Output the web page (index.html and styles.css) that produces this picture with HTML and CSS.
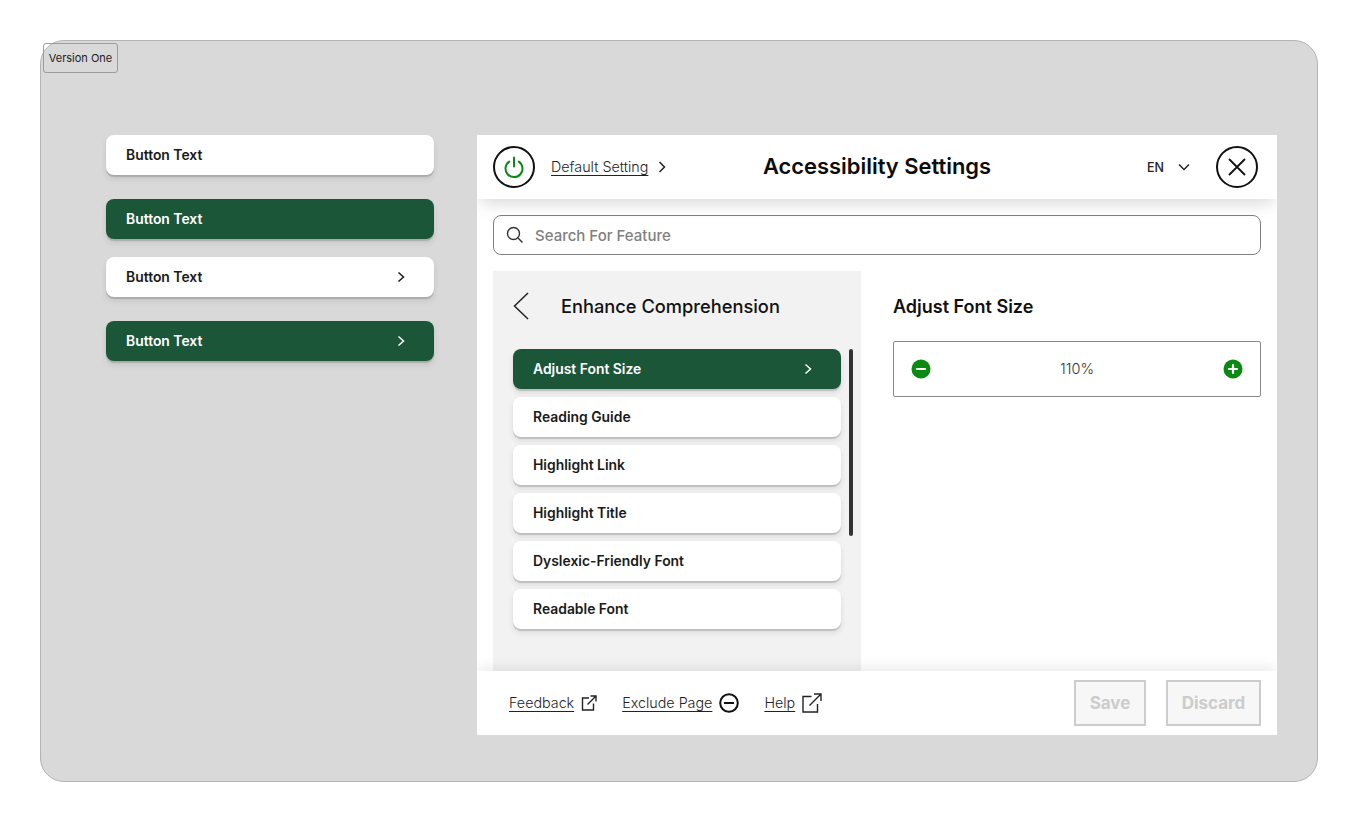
FILE: index.html
```html
<!DOCTYPE html>
<html lang="en">
<head>
<meta charset="utf-8">
<title>Accessibility Settings</title>
<link rel="stylesheet" href="styles.css">
</head>
<body>
<main class="frame">
  <div class="version">Version One</div>
  <section class="samples">
    <div class="sample-group">
      <button class="btn">Button Text</button>
      <button class="btn btn-dark">Button Text</button>
    </div>
    <div class="sample-group">
      <button class="btn">Button Text<svg class="chev" viewBox="0 0 12 12"><path d="M3.500 1.500 8.500 6 3.500 10.500"/></svg></button>
      <button class="btn btn-dark">Button Text<svg class="chev" viewBox="0 0 12 12"><path d="M3.500 1.500 8.500 6 3.500 10.500"/></svg></button>
    </div>
  </section>
  <section class="panel">
    <header class="head">
      <div class="head-left">
        <span class="round"><svg class="power" viewBox="0 0 24 24"><path d="M7.200 6.600a8.500 8.500 0 1 0 9.600 0"/><path d="M12 2.500v9"/></svg></span>
        <a class="link">Default Setting</a>
        <svg class="chev chev-head" viewBox="0 0 12 12"><path d="M3.500 1 8.500 6 3.500 11"/></svg>
      </div>
      <h1 class="title">Accessibility Settings</h1>
      <div class="head-right">
        <span class="lang">EN</span>
        <svg class="lang-chev" viewBox="0 0 12 8"><path d="M1 1.500 6 6.500 11 1.500"/></svg>
        <span class="round"><svg class="close" viewBox="0 0 20 20"><path d="M2 2 18 18M18 2 2 18"/></svg></span>
      </div>
    </header>
    <div class="search-wrap">
      <div class="search">
        <svg class="search-icon" viewBox="0 0 18 18"><circle cx="7.500" cy="7.500" r="6"/><path d="M12 12 16.500 16.500"/></svg>
        <span>Search For Feature</span>
      </div>
    </div>
    <div class="body">
      <nav class="nav">
        <div class="nav-head">
          <svg class="back" viewBox="0 0 16 28"><path d="M15 1 1.500 14 15 27"/></svg>
          <h2 class="nav-title">Enhance Comprehension</h2>
        </div>
        <div class="nav-scroll">
          <div class="nav-list">
            <button class="btn btn-dark">Adjust Font Size<svg class="chev" viewBox="0 0 12 12"><path d="M3.500 1.500 8.500 6 3.500 10.500"/></svg></button>
            <button class="btn">Reading Guide</button>
            <button class="btn">Highlight Link</button>
            <button class="btn">Highlight Title</button>
            <button class="btn">Dyslexic-Friendly Font</button>
            <button class="btn">Readable Font</button>
          </div>
          <div class="scrollbar"></div>
        </div>
      </nav>
      <div class="detail">
        <h2 class="detail-title">Adjust Font Size</h2>
        <div class="stepper">
          <svg class="step" viewBox="0 0 20 20"><circle cx="10" cy="10" r="9.500"/><path d="M6 10h8"/></svg>
          <span class="step-value">110%</span>
          <svg class="step" viewBox="0 0 20 20"><circle cx="10" cy="10" r="9.500"/><path d="M6 10h8M10 6v8"/></svg>
        </div>
      </div>
    </div>
    <footer class="foot">
      <div class="foot-links">
        <div class="foot-item"><a class="link">Feedback</a>
          <svg class="ext" viewBox="0 0 16 16"><path d="M8 3H1.500V15H12.500V8.500M6.500 9.500 15 1M9.500 1H15V6.500"/></svg></div>
        <div class="foot-item"><a class="link">Exclude Page</a>
          <svg class="exclude" viewBox="0 0 20 20"><circle cx="10" cy="10" r="8.800"/><path d="M5 10h10"/></svg></div>
        <div class="foot-item"><a class="link">Help</a>
          <svg class="ext ext-lg" viewBox="0 0 20 20"><path d="M9.500 3.500H1V19H15.500V11M7.500 12.500 19 1M12 1H19V8"/></svg></div>
      </div>
      <div class="foot-actions">
        <button class="ghost ghost-save">Save</button>
        <button class="ghost ghost-discard">Discard</button>
      </div>
    </footer>
  </section>
</main>
</body>
</html>
```

FILE: styles.css
```css
* { box-sizing: border-box; }
html, body { margin: 0; padding: 0; background: #fff; }
body { padding: 40px; font-family: Inter, "Liberation Sans", sans-serif; color: #1a1a1a; }
h1, h2 { margin: 0; }

.frame {
  position: relative;
  width: 1278px;
  height: 742px;
  display: flex;
  gap: 43px;
  padding: 94px 0 0 65px;
  background: #d9d9d9;
  border: 1px solid #b4b4b4;
  border-radius: 24px;
}
.version {
  position: absolute;
  left: 2px;
  top: 2px;
  width: 75px;
  height: 30px;
  display: flex;
  align-items: center;
  justify-content: center;
  padding-bottom: 1px;
  font-size: 11px;
  color: #222;
  border: 1px solid #9c9c9c;
  border-radius: 3px;
}

.samples { width: 328px; display: flex; flex-direction: column; gap: 18px; }
.sample-group { display: flex; flex-direction: column; gap: 24px; }

.btn {
  width: 328px;
  height: 40px;
  flex: none;
  display: flex;
  align-items: center;
  justify-content: space-between;
  padding: 0 27px 1px 20px;
  border: 0;
  border-radius: 8px;
  background: #fff;
  color: #1a1a1a;
  font: 600 13.900px Inter, "Liberation Sans", sans-serif;
  box-shadow: 0 2px 1px rgba(0, 0, 0, .15), 0 4px 6px rgba(0, 0, 0, .09);
}
.btn-dark { background: #1c5639; color: #fff; }
.chev { width: 12px; height: 12px; margin-top: 1px; fill: none; stroke: currentColor; stroke-width: 1.500; }

.panel {
  width: 800px;
  height: 600px;
  display: flex;
  flex-direction: column;
  background: #fff;
  overflow: hidden;
}

.head {
  position: relative;
  z-index: 2;
  flex: none;
  height: 64px;
  display: grid;
  grid-template-columns: 1fr auto 1fr;
  align-items: center;
  padding: 0 16px;
  background: #fff;
  box-shadow: 0 8px 16px -4px rgba(0, 0, 0, .16);
}
.head-left { display: flex; align-items: center; }
.head-right { display: flex; align-items: center; justify-content: flex-end; margin-right: 3px; }
.round {
  width: 42px;
  height: 42px;
  flex: none;
  display: flex;
  align-items: center;
  justify-content: center;
  border: 2px solid #111;
  border-radius: 50%;
}
.power { width: 24px; height: 24px; fill: none; stroke: #0a8a12; stroke-width: 2; stroke-linecap: round; }
.close { width: 20px; height: 20px; fill: none; stroke: #111; stroke-width: 1.800; }
.link {
  font-size: 14.300px;
  font-weight: 300;
  line-height: 20px;
  color: #222;
  text-decoration: underline;
  text-decoration-thickness: 1px;
  text-underline-offset: 3px;
}
.head-left .link { margin-left: 16px; }
.chev-head { margin: 0 0 0 8px; color: #222; }
.title { padding-bottom: 2px; font-size: 21.900px; font-weight: 600; color: #0c0c0c; }
.lang { font-size: 12.500px; font-weight: 500; color: #222; }
.lang-chev { width: 12px; height: 8px; margin: 0 26px 0 14px; fill: none; stroke: #222; stroke-width: 1.500; }

.search-wrap { flex: none; padding: 16px 16px; }
.search {
  height: 40px;
  display: flex;
  align-items: center;
  gap: 11px;
  padding: 0 12px;
  background: #fff;
  border: 1px solid #7f7f7f;
  border-radius: 8px;
  font-size: 15px;
  font-weight: 500;
  color: #808080;
}
.search-icon { width: 18px; height: 18px; fill: none; stroke: #333; stroke-width: 1.400; }

.body { flex: 1; min-height: 0; display: flex; gap: 32px; padding: 0 16px; }
.nav { width: 368px; flex: none; background: #f2f2f2; padding: 0 8px 0 20px; }
.nav-head { height: 70px; margin-bottom: 8px; display: flex; align-items: center; gap: 32px; }
.back { width: 16px; height: 28px; fill: none; stroke: #222; stroke-width: 1.500; }
.nav-title { font-size: 18.250px; font-weight: 500; color: #111; }
.nav-scroll { display: flex; gap: 8px; }
.nav-list { display: flex; flex-direction: column; gap: 8px; }
.scrollbar { width: 4px; height: 187px; background: #333; border-radius: 2px; }

.detail { flex: 1; }
.detail-title { height: 70px; padding-top: 25px; font-size: 18px; font-weight: 600; color: #111; }
.stepper {
  height: 56px;
  display: flex;
  align-items: center;
  justify-content: space-between;
  padding: 0 17px;
  border: 1px solid #888;
  border-radius: 2px;
  font-size: 14.500px;
  font-weight: 300;
  color: #333;
}
.step-value { padding-bottom: 2px; }
.step { width: 20px; height: 20px; }
.step circle { fill: #0a8a12; }
.step path { fill: none; stroke: #fff; stroke-width: 2.200; stroke-linecap: round; }

.foot {
  position: relative;
  z-index: 2;
  flex: none;
  height: 64px;
  display: flex;
  align-items: center;
  justify-content: space-between;
  padding: 0 16px 0 32px;
  background: #fff;
  box-shadow: 0 -6px 12px -2px rgba(0, 0, 0, .08);
}
.foot-links { display: flex; gap: 25px; }
.foot-item { display: flex; align-items: center; gap: 7px; }
.ext { width: 16px; height: 16px; fill: none; stroke: #222; stroke-width: 1.400; }
.ext-lg { width: 20px; height: 20px; }
.exclude { width: 20px; height: 20px; fill: none; stroke: #111; stroke-width: 2; }
.foot-actions { display: flex; gap: 20px; }
.ghost {
  height: 46px;
  border: 2px solid #ccc;
  background: #f7f7f7;
  color: #ccc;
  font: 700 17px Inter, "Liberation Sans", sans-serif;
}
.ghost-save { width: 72px; }
.ghost-discard { width: 95px; }
```
